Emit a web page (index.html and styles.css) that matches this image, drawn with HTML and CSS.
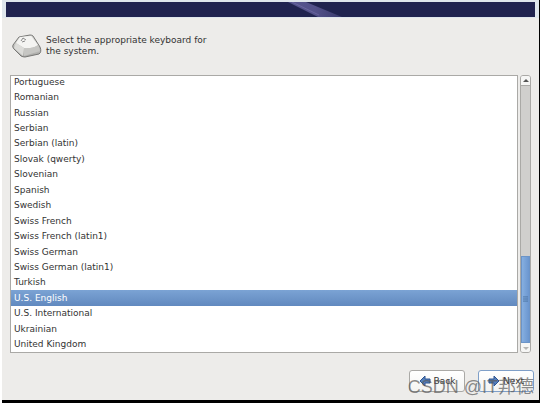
FILE: index.html
```html
<!DOCTYPE html>
<html lang="en">
<head>
    <meta charset="UTF-8">
    <meta name="viewport" content="width=device-width, initial-scale=1.0">
    <title>Keyboard selection</title>
    <link rel="stylesheet" href="styles.css">
</head>
<body>
    <form class="installer">
        <header class="banner">
            <svg viewBox="0 0 529 15" preserveAspectRatio="none">
                <defs>
                    <linearGradient id="beam" x1="0" x2="1">
                        <stop offset="0" stop-color="#6b69a8" stop-opacity="0.7"/>
                        <stop offset="0.5" stop-color="#5f5c98" stop-opacity="0.8"/>
                        <stop offset="1" stop-color="#5f5c98" stop-opacity="0.4"/>
                    </linearGradient>
                </defs>
                <path d="M282 0h18l36 15h-24z" fill="url(#beam)"/>
                <path d="M286 0l27 13" stroke="#8683bb" stroke-opacity="0.4"/>
            </svg>
        </header>

        <main class="content">
            <div class="intro">
                <svg class="key" viewBox="0 0 30 24">
                    <defs>
                        <linearGradient id="keyFront" x1="0" y1="0" x2="0" y2="1">
                            <stop offset="0" stop-color="#dededb"/>
                            <stop offset="1" stop-color="#a8a8a5"/>
                        </linearGradient>
                    </defs>
                    <path d="M7 3L18 1Q20 1 21 2L28 13Q30 18 27 20L13 23Q11 23 9 22L2 15Q0 13 1 11Z" fill="url(#keyFront)" stroke="#777775"/>
                    <path d="M8 3L19 2L26 11Q20 15 12 14L4 9Z" fill="#f4f4f2"/>
                    <path d="M12 14Q20 15 26 11L28 17L12 22Z" fill="#c6c6c3"/>
                    <path d="M12 14L11 22L2 14L4 9Z" fill="#dcdcd9"/>
                    <path d="M9 7l2-3 3 2M10 8l3-1" fill="none" stroke="#888"/>
                </svg>
                <p>Select the appropriate keyboard for<br>the system.</p>
            </div>

            <div class="picker">
                <div class="list" role="radiogroup" aria-label="Keyboard">
                    <div class="rows">
                        <label><input type="radio" name="keyboard">Portuguese</label>
                        <label><input type="radio" name="keyboard">Romanian</label>
                        <label><input type="radio" name="keyboard">Russian</label>
                        <label><input type="radio" name="keyboard">Serbian</label>
                        <label><input type="radio" name="keyboard">Serbian (latin)</label>
                        <label><input type="radio" name="keyboard">Slovak (qwerty)</label>
                        <label><input type="radio" name="keyboard">Slovenian</label>
                        <label><input type="radio" name="keyboard">Spanish</label>
                        <label><input type="radio" name="keyboard">Swedish</label>
                        <label><input type="radio" name="keyboard">Swiss French</label>
                        <label><input type="radio" name="keyboard">Swiss French (latin1)</label>
                        <label><input type="radio" name="keyboard">Swiss German</label>
                        <label><input type="radio" name="keyboard">Swiss German (latin1)</label>
                        <label><input type="radio" name="keyboard">Turkish</label>
                        <label><input type="radio" name="keyboard" checked>U.S. English</label>
                        <label><input type="radio" name="keyboard">U.S. International</label>
                        <label><input type="radio" name="keyboard">Ukrainian</label>
                        <label><input type="radio" name="keyboard">United Kingdom</label>
                    </div>
                </div>
                <div class="scrollbar">
                    <button type="button" class="step" aria-label="Scroll up">
                        <svg viewBox="0 0 8 8"><path d="M1 5l3-3 3 3z" fill="#555"/></svg>
                    </button>
                    <div class="track">
                        <div class="thumb">
                            <svg viewBox="0 0 6 6"><path d="M0 0.500h6M0 3h6M0 5.500h6" stroke="#48709f"/></svg>
                        </div>
                    </div>
                    <button type="button" class="step" aria-label="Scroll down">
                        <svg viewBox="0 0 8 8"><path d="M1 3l3 3 3-3z" fill="#b5b5b3"/></svg>
                    </button>
                </div>
            </div>

            <footer class="actions">
                <button type="button" class="btn">
                    <svg viewBox="0 0 12 12"><path d="M1 6l5-5v3h5v4H6v3z" fill="#5580bd" stroke="#2f5590"/></svg>
                    Back
                </button>
                <button type="button" class="btn btn-next">
                    <svg viewBox="0 0 12 12"><path d="M11 6L6 1v3H1v4h5v3z" fill="#5580bd" stroke="#2f5590"/></svg>
                    Next
                </button>
                <span class="watermark">CSDN @IT邦德</span>
            </footer>
        </main>
    </form>
</body>
</html>
```

FILE: styles.css
```css
* {
    box-sizing: border-box;
}

body {
    margin: 0;
    background-color: #fff;
    font-family: "DejaVu Sans", sans-serif;
    font-size: 9px;
    color: #333;
}

.installer {
    margin: 0 6px 0 2px;
    background-color: #edecea;
    border-right: 1px solid #000;
    border-bottom: 3px solid #000;
}

.banner {
    height: 18px;
    padding: 2px 4px 0;
    background-color: #dfe6ec;
}

.banner svg {
    display: block;
    width: 100%;
    height: 15px;
    background-color: #20234f;
}

.content {
    padding: 16px 8px 8px;
}

.intro {
    display: flex;
    align-items: center;
    gap: 4px;
    height: 24px;
    padding-left: 2px;
}

.intro p {
    margin: 0;
    line-height: 11px;
}

.key {
    width: 30px;
    height: 24px;
}

.picker {
    display: flex;
    gap: 2px;
    margin-top: 17px;
    height: 278px;
}

.list {
    flex: 1;
    overflow: hidden;
    background-color: #fff;
    border: 1px solid #aaa9a6;
}

.rows {
    display: flex;
    flex-direction: column;
    height: 278px;
    margin-top: -2px;
}

.rows label {
    flex: 1;
    display: flex;
    align-items: center;
    padding-left: 3px;
}

.rows input {
    position: absolute;
    appearance: none;
    margin: 0;
}

.rows label:has(input:checked) {
    background: linear-gradient(#7ba3d4, #6189bf);
    color: #fff;
}

.scrollbar {
    display: flex;
    flex-direction: column;
    width: 11px;
    border: 1px solid #aaa9a6;
    border-radius: 3px;
    overflow: hidden;
}

.step {
    display: flex;
    align-items: center;
    justify-content: center;
    height: 9px;
    padding: 0;
    border: 0;
    background-color: #f6f6f5;
}

.step svg {
    width: 8px;
    height: 8px;
}

.track {
    flex: 1;
    display: flex;
    align-items: flex-end;
    background-color: #d0cfcd;
    border-top: 1px solid #aaa9a6;
}

.thumb {
    display: flex;
    align-items: center;
    justify-content: center;
    width: 100%;
    height: 34%;
    background: linear-gradient(to right, #86afe0, #6b96cf);
    border: 1px solid #6b94c8;
}

.thumb svg {
    width: 5px;
    height: 6px;
}

.actions {
    position: relative;
    display: flex;
    justify-content: flex-end;
    gap: 13px;
    margin: 17px -3px 0 0;
}

.btn {
    display: flex;
    align-items: center;
    justify-content: center;
    gap: 3px;
    width: 56px;
    height: 22px;
    padding: 0;
    border: 1px solid #aaa9a6;
    border-radius: 3px;
    background: linear-gradient(#fff, #f4f4f2);
    font-family: inherit;
    font-size: 9px;
    color: #333;
}

.btn-next {
    border-color: #7f9fc8;
}

.btn svg {
    width: 12px;
    height: 12px;
}

/* printed over the buttons */
.watermark {
    position: absolute;
    right: 0;
    bottom: -5px;
    font-family: "Liberation Sans", "Noto Sans CJK SC", sans-serif;
    font-size: 18px;
    line-height: 20px;
    color: rgba(90, 90, 90, 0.7);
    white-space: nowrap;
    pointer-events: none;
}
```
